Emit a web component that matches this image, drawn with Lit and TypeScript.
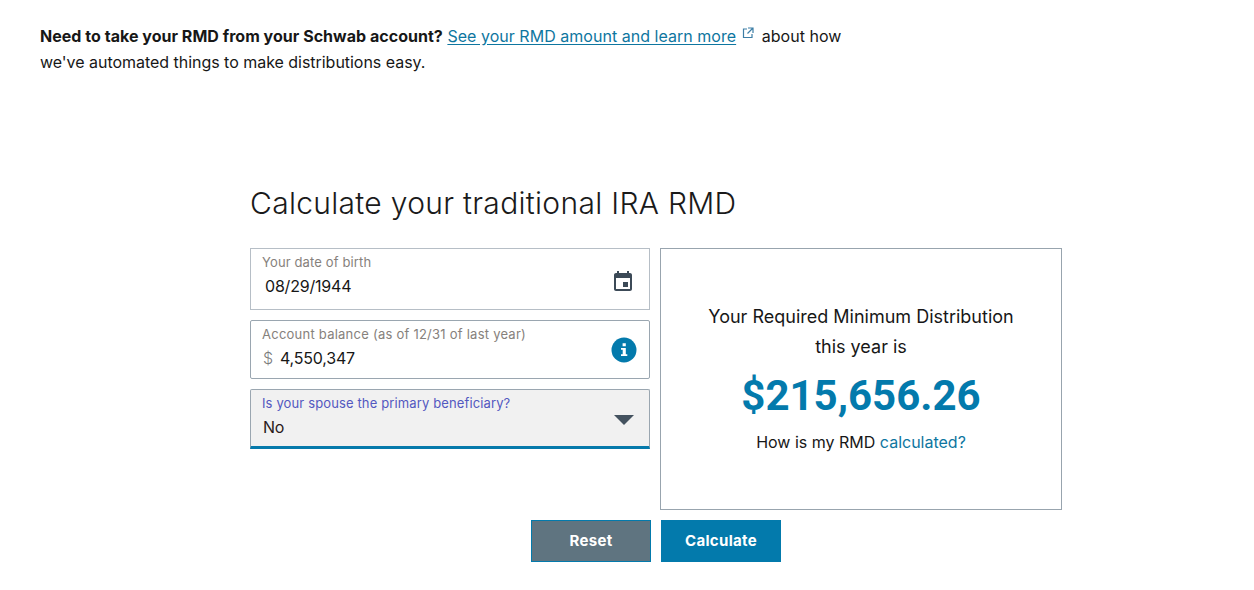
import { LitElement, html, css } from "lit";
import { customElement } from "lit/decorators.js";

@customElement("app-root")
export class AppRoot extends LitElement {
  static styles = css`
    :host { display: block; width: 1254px; height: 590px; background: #fff; overflow: hidden;
      font-family: Inter, "Liberation Sans", sans-serif; color: #171717; font-size: 16px; }
    .intro { padding: 23px 0 0 40px; line-height: 26px; font-size: 16px; }
    .first { letter-spacing: 0.03px; }
    .second { letter-spacing: -0.03px; }
    .intro b { font-weight: 700; }
    .intro a { color: #0e76a0; text-decoration: underline; text-underline-offset: 2px; }
    .ext { display: inline-block; width: 12px; height: 12px; margin: 0 3px 0 6px; vertical-align: 3px; }
    .calc { display: flex; flex-direction: column; padding: 108px 0 0 250px; width: 812px; }
    h2 { margin: 0 0 25px; font-weight: 300; font-size: 30px; line-height: 40px; color: #1a1a1a; letter-spacing: 0.3px; }
    .cols { display: flex; gap: 10px; }
    .fields { width: 400px; display: flex; flex-direction: column; gap: 10px; }
    .field { box-sizing: border-box; display: flex; align-items: center; justify-content: space-between;
      width: 400px; border: 1px solid #b6bec6; padding: 0 12px 0 11px; background: #fff; }
    .f1 { height: 62px; }
    .f2 { height: 59px; border-color: #9aa6b0; border-radius: 2px; }
    .f3 { height: 60px; background: #f1f1f1; border-color: #9aa6b0; border-bottom: 3px solid #067aab; border-radius: 2px 2px 0 0; }
    .stack { padding-bottom: 8px; }
    .f2 .stack { padding-bottom: 5px; }
    .f3 .stack { padding-bottom: 3px; }
    .lbl { font-size: 13px; line-height: 16px; color: #86817c; letter-spacing: 0.13px; }
    .f2 .lbl { letter-spacing: 0.24px; }
    .val { font-size: 16px; line-height: 22px; color: #171717; margin-top: 5px; letter-spacing: -0.2px; }
    .f1 .val { padding-left: 3px; }
    .f3 .lbl { color: #5358c0; }
    .f3 .val { color: #2a1a1a; padding-left: 1px; }
    .dollar { color: #7c7c7c; margin: 0 7px 0 1px; font-weight: 300; }
    .cal { margin: 6px 2px 0 0; }
    .arrow { margin: 4px 3px 0 0; }
    .result { box-sizing: border-box; width: 402px; height: 262px; border: 1px solid #98a4ae; display: flex;
      flex-direction: column; align-items: center; padding-top: 53px; text-align: center; }
    .result p { margin: 0; font-size: 18px; line-height: 30px; }
    .amount { font-family: Roboto, sans-serif; font-weight: 700; font-size: 42px; line-height: 52px; color: #037aac; margin-top: 8px; }
    .result .how { margin-top: 7px; font-size: 16px; line-height: 26px; }
    .how span { color: #0e76a0; }
    .btns { display: flex; justify-content: center; gap: 10px; margin-top: 10px; }
    button { width: 120px; height: 42px; box-sizing: border-box; border: 1px solid #037aac; color: #fff; font: 700 15px Inter, sans-serif; letter-spacing: 0.3px; padding: 0 0 2px; }
    .reset { background: #5f7480; }
    .go { background: #037aac; }
  `;
  render() {
    return html`
      <div class="intro">
        <div class="first"><b>Need to take your RMD from your Schwab account?</b> <a>See your RMD amount and learn more</a><svg class="ext" viewBox="0 0 12 12" fill="none" stroke="#3d7ea6" stroke-width="1.2"><path d="M5 2H1.500v8.500H10V7"/><path d="M6 1h5v5M11 1 5.500 6.500"/></svg> about how</div>
        <div class="second">we've automated things to make distributions easy.</div>
      </div>
      <section class="calc">
        <h2>Calculate your traditional IRA RMD</h2>
        <div class="cols">
          <div class="fields">
            <div class="field f1"><div class="stack"><div class="lbl">Your date of birth</div><div class="val">08/29/1944</div></div>
              <svg class="cal" width="24" height="24" viewBox="0 0 24 24" fill="#3c4a57"><path d="M17 12h-5v5h5v-5zM16 1v2H8V1H6v2H5c-1.110 0-1.990.9-1.990 2L3 19c0 1.100.89 2 2 2h14c1.100 0 2-.9 2-2V5c0-1.100-.9-2-2-2h-1V1h-2zm3 18H5V8h14v11z"/></svg></div>
            <div class="field f2"><div class="stack"><div class="lbl">Account balance (as of 12/31 of last year)</div><div class="val"><span class="dollar">$</span>4,550,347</div></div>
              <svg width="26" height="26" viewBox="0 0 26 26"><circle cx="13" cy="13" r="12.500" fill="#037aac"/><path fill="#fff" d="M10 11h4.800v6.300h1.500V19H10v-1.700h1.700v-4.600H10zM11.600 6.300h3.200v3h-3.200z"/></svg></div>
            <div class="field f3"><div class="stack"><div class="lbl">Is your spouse the primary beneficiary?</div><div class="val">No</div></div>
              <svg class="arrow" width="20" height="10" viewBox="0 0 20 10" fill="#44525f"><path d="M0 0h20L10 10z"/></svg></div>
          </div>
          <div class="result">
            <p>Your Required Minimum Distribution</p>
            <p>this year is</p>
            <div class="amount">$215,656.26</div>
            <p class="how">How is my RMD <span>calculated?</span></p>
          </div>
        </div>
        <div class="btns"><button class="reset">Reset</button><button class="go">Calculate</button></div>
      </section>`;
  }
}
